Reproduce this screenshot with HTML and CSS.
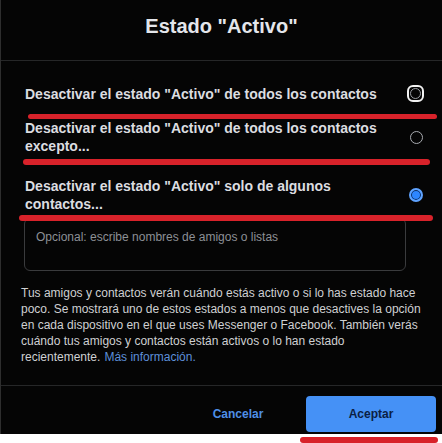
FILE: index.html
```html
<!DOCTYPE html>
<html lang="es">
<head>
<meta charset="utf-8">
<title>Estado "Activo"</title>
<link rel="stylesheet" href="styles.css">
</head>
<body>
<div class="page">
  <div class="dialog">
    <div class="header">Estado "Activo"</div>
    <div class="content">
      <div class="options">
        <div class="option opt1">
          <div class="label">Desactivar el estado "Activo" de todos los contactos</div>
          <div class="radio-box"><span class="radio radio-focus"><span class="radio-ring"></span></span></div>
        </div>
        <div class="option opt2">
          <div class="label">Desactivar el estado "Activo" de todos los contactos excepto...</div>
          <div class="radio-box"><span class="radio radio-off"></span></div>
        </div>
        <div class="option opt3">
          <div class="label">Desactivar el estado "Activo" solo de algunos contactos...</div>
          <div class="radio-box"><span class="radio radio-on"></span></div>
        </div>
      </div>
      <div class="input-box"><span class="placeholder">Opcional: escribe nombres de amigos o listas</span></div>
      <p class="info">Tus amigos y contactos verán cuándo estás activo o si lo has estado hace poco. Se mostrará uno de estos estados a menos que desactives la opción en cada dispositivo en el que uses Messenger o Facebook. También verás cuándo tus amigos y contactos están activos o lo han estado <span class="tail">recientemente.</span><a class="link" href="#">Más información.</a></p>
    </div>
    <div class="footer">
      <button class="btn btn-cancel">Cancelar</button>
      <button class="btn btn-accept">Aceptar</button>
    </div>
  </div>
  <span class="mark mark1"></span>
  <span class="mark mark2"></span>
  <span class="mark mark3"></span>
  <span class="mark mark4"></span>
</div>
</body>
</html>
```

FILE: styles.css
```css
html, body {
  margin: 0;
  padding: 0;
  background: #ffffff;
}

.page {
  position: relative;
  width: 442px;
  height: 443px;
  overflow: hidden;
  font-family: "Liberation Sans", Arial, sans-serif;
}

.dialog {
  box-sizing: border-box;
  width: 442px;
  height: 434px;
  background: #050505;
  border-left: 1px solid #2e2e2e;
  display: flex;
  flex-direction: column;
}

.header {
  padding: 14px 0 22px;
  line-height: 24px;
  font-size: 20px;
  font-weight: bold;
  color: #e4e6eb;
  text-align: center;
  border-bottom: 1px solid #262728;
}

.content {
  padding-left: 20px;
}

.options {
  padding: 24px 0 0 4px;
}

.option {
  display: flex;
  align-items: center;
  color: #dcdde0;
  font-size: 14px;
  font-weight: bold;
  line-height: 18px;
}

.opt1 { margin-bottom: 16px; }
.opt2 { margin-bottom: 22px; }

.label {
  width: 370px;
}

.radio-box {
  width: 24px;
  height: 18px;
  margin-left: 9px;
  display: flex;
  justify-content: center;
  align-items: center;
}

.radio {
  box-sizing: border-box;
  display: block;
  border-radius: 50%;
  flex: none;
}

.radio-off {
  width: 13px;
  height: 13px;
  border: 1px solid #a8abb0;
}

.radio-focus {
  width: 17px;
  height: 17px;
  border-radius: 6px;
  border: 2px solid #f2f2f2;
  display: flex;
  align-items: center;
  justify-content: center;
  margin-top: -2px;
  margin-left: -2px;
}

.radio-ring {
  box-sizing: border-box;
  display: block;
  width: 11px;
  height: 11px;
  border-radius: 50%;
  border: 1.5px solid #9a9da2;
}

.radio-on {
  width: 14px;
  height: 14px;
  background: #2d86ff;
  border: 2px solid #5fa3ff;
  box-shadow: inset 0 0 0 1px #0a2a5a;
}

.input-box {
  box-sizing: border-box;
  margin: 5px 0 0 3px;
  width: 382px;
  height: 53px;
  border: 1px solid #3a3b3d;
  border-radius: 6px;
  padding: 10px 11px;
  font-size: 12px;
  line-height: 16px;
}

.placeholder {
  color: #8d9096;
}

.info {
  margin: 14px 0 0;
  width: 400px;
  font-size: 12px;
  line-height: 16px;
  color: #cfd0d2;
}

.link {
  margin-left: 4px;
  color: #5d8fd8;
  text-decoration: none;
}

.footer {
  margin-top: auto;
  border-top: 1px solid #262728;
  padding: 10px 6px 2px 0;
  display: flex;
  justify-content: flex-end;
  gap: 20px;
}

.btn {
  height: 36px;
  border: none;
  border-radius: 4px;
  font-family: "Liberation Sans", Arial, sans-serif;
  font-size: 12px;
  font-weight: bold;
  padding: 0;
  cursor: pointer;
}

.btn-cancel {
  width: 96px;
  background: transparent;
  color: #4f8fe6;
}

.btn-accept {
  width: 130px;
  background: #4591f6;
  color: #0b1f44;
}

.mark {
  position: absolute;
  display: block;
  height: 5px;
  border-radius: 3px;
  background: #d8222a;
}

.mark1 { left: 28px; top: 114px; width: 409px; }
.mark2 { left: 23px; top: 159px; width: 407px; height: 6px; }
.mark3 { left: 19px; top: 215px; width: 414px; height: 6px; }
.mark4 { left: 300px; top: 437px; width: 138px; height: 6px; }
```
